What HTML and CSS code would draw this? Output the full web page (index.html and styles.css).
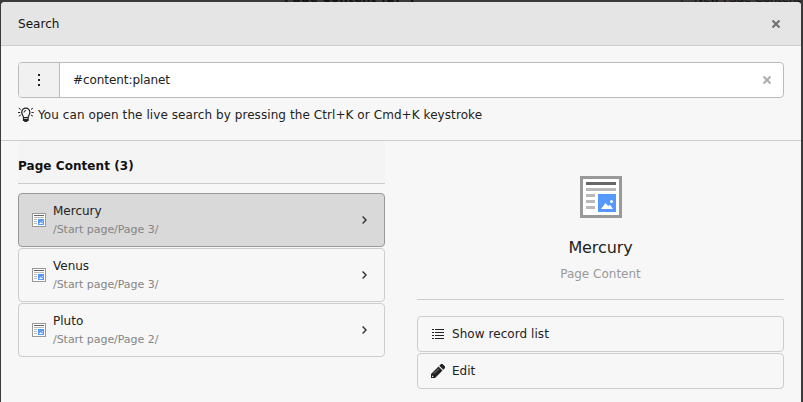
FILE: index.html
```html
<!DOCTYPE html>
<html lang="en">
<head>
<meta charset="utf-8">
<title>Search</title>
<link rel="stylesheet" href="styles.css">
</head>
<body>
<svg class="defs" width="0" height="0">
  <symbol id="content" viewBox="0 0 14 14">
    <path fill="#999" d="M0 0h14v14H0z"/><path fill="#fff" d="M1 1h12v12H1z"/>
    <path fill="#666" d="M2 2h10v1H2z"/>
    <path fill="#b9b9b9" d="M2 4h10v1H2zM2 6h3v1H2zM2 8h3v1H2zM2 10h3v1H2z"/>
    <path fill="#59f" d="M6 6h6v6H6z"/>
    <path fill="#fff" d="M7 11l1.500-2 .9 1 .6-.4 1 1.400z"/><circle cx="10.5" cy="8.5" r=".5" fill="#fff"/>
  </symbol>
  <symbol id="chevron" viewBox="0 0 5 8"><path d="M.6.600L4 4 .6 7.400" fill="none" stroke="#333" stroke-width="1.400"/></symbol>
  <symbol id="close" viewBox="0 0 8 8"><path d="M.5.500l7 7M7.500.500l-7 7" fill="none" stroke="currentColor" stroke-width="2.200"/></symbol>
</svg>
<div class="behind">
  <span class="behind-title">Page Content (2)&nbsp; ?</span>
  <span class="behind-action">+&nbsp; New Page Content</span>
</div>
<main class="modal">
  <header class="modal-header">
    <span class="title">Search</span>
    <svg class="close"><use href="#close"/></svg>
  </header>
  <section class="search">
    <div class="input-group">
      <div class="addon"><svg width="2" height="12"><path fill="#222" d="M0 0h2v2H0zM0 5h2v2H0zM0 10h2v2H0z"/></svg></div>
      <div class="field"><span class="query">#content:planet</span><svg class="close clear"><use href="#close"/></svg></div>
    </div>
    <div class="hint">
      <svg width="16" height="16" viewBox="0 0 16 16" fill="none" stroke="#222">
        <path stroke-width="1.200" d="M5.500 10.500C5.500 9 3.700 7.800 3.700 5.300a4.100 4.100 0 0 1 8.200 0c0 2.500-1.800 3.700-1.800 5.200zM5.500 10.500h4.600v3H5.500zM5.500 12.300h4.600M6.300 14.500h3"/>
        <path d="M6 5.500a2 2 0 0 1 2-2M.8 1.200l1.900 1.200M0 5.500h2.200M.8 9.200l1.900-1.200M14.900 1.200l-1.900 1.200M15.700 5.500h-2.200M14.900 9.200l-1.900-1.200"/>
      </svg>
      <span class="hint-text">You can open the live search by pressing the Ctrl+K or Cmd+K keystroke</span>
    </div>
  </section>
  <div class="results">
    <section class="list">
      <h2><span>Page Content (3)</span></h2>
      <div class="item active"><svg class="icon"><use href="#content"/></svg><div class="label"><span class="name">Mercury</span><span class="path">/Start page/Page 3/</span></div><svg class="chevron"><use href="#chevron"/></svg></div>
      <div class="item"><svg class="icon"><use href="#content"/></svg><div class="label"><span class="name">Venus</span><span class="path">/Start page/Page 3/</span></div><svg class="chevron"><use href="#chevron"/></svg></div>
      <div class="item"><svg class="icon"><use href="#content"/></svg><div class="label"><span class="name">Pluto</span><span class="path">/Start page/Page 2/</span></div><svg class="chevron"><use href="#chevron"/></svg></div>
    </section>
    <section class="detail">
      <div class="summary">
        <svg class="big"><use href="#content"/></svg>
        <span class="detail-name">Mercury</span>
        <span class="detail-type">Page Content</span>
      </div>
      <div class="action">
        <svg width="14" height="14" viewBox="0 0 14 14"><path fill="#222" d="M1 2h2v1H1zM4 2h9v1H4zM1 5h2v1H1zM4 5h9v1H4zM1 8h2v1H1zM4 8h9v1H4zM1 11h2v1H1zM4 11h9v1H4z"/></svg>
        <span class="action-list">Show record list</span>
      </div>
      <div class="action">
        <svg width="14" height="14" viewBox="0 0 14 14"><path fill="#222" d="M0 14V10l7.500-7.500 4 4L4 14zM8.300 1.700L10 0h1.500L14 2.500V4l-1.700 1.700z"/><path d="M2.800 9.700l5-5" stroke="#aaa" stroke-width=".8"/><path fill="#f7f7f7" d="M1 11.300l1.700 1.700H1z"/></svg>
        <span class="action-edit">Edit</span>
      </div>
    </section>
  </div>
</main>
</body>
</html>
```
FILE: styles.css
```css
* { box-sizing: border-box; }
body {
  margin: 0;
  height: 402px;
  overflow: hidden;
  padding: 2px 2px 0 1px;
  background: #3b393a;
  color: #222;
  font: 12px/18px Verdana, "DejaVu Sans", sans-serif;
}
svg { display: block; flex: none; }
.defs { position: absolute; }
.behind { position: absolute; top: 0; left: 0; width: 803px; height: 2px; overflow: hidden; color: #111; }
.behind span { position: absolute; top: -9px; line-height: 14px; white-space: nowrap; }
.behind-title { left: 284px; font-weight: bold; letter-spacing: .1px; }
.behind-action { left: 677px; letter-spacing: -.25px; }
.modal { position: relative; height: 400px; background: #f7f7f7; border-radius: 4px 4px 0 0; overflow: hidden; }
.modal-header {
  height: 44px;
  display: flex;
  align-items: center;
  justify-content: space-between;
  padding: 0 21px 0 17px;
  background: #e5e5e5;
  border-bottom: 1px solid #cdcdcd;
  color: #111;
}
.title { letter-spacing: .05px; }
.close { width: 8px; height: 8px; color: #737373; }
.search { height: 95px; padding: 16px 17px 0; border-bottom: 1px solid #cdcdcd; }
.input-group { display: flex; height: 36px; border: 1px solid #bbb; border-radius: 4px; background: #fff; overflow: hidden; }
.addon { width: 41px; display: flex; align-items: center; justify-content: center; background: #f1f1f1; border-right: 1px solid #bbb; }
.field { flex: 1; display: flex; align-items: center; justify-content: space-between; padding: 0 12px 0 13px; }
.query { letter-spacing: -.07px; }
.clear { color: #b0b0b0; }
.hint { display: flex; align-items: center; gap: 4px; margin-top: 8px; white-space: nowrap; }
.hint-text { letter-spacing: .075px; }
.results { display: grid; grid-template-columns: 367px 367px; gap: 32px; padding: 0 17px; }
h2 { height: 43px; margin: 0 0 9px; padding-top: 16px; background: #f4f4f4; border-bottom: 1px solid #cdcdcd; color: #111; font-size: 12px; line-height: 18px; letter-spacing: .06px; }
.item { height: 54px; display: flex; align-items: center; gap: 7px; margin-bottom: 1px; padding: 0 17px 0 13px; border: 1px solid #cdcdcd; border-radius: 4px; }
.item.active { background: #d9d9d9; border-color: #999; }
.icon { width: 14px; height: 14px; }
.label { flex: 1; display: flex; flex-direction: column; }
.path { font-size: 11px; color: #858585; letter-spacing: -.04px; padding-top: 1px; margin-bottom: -1px; }
.chevron { width: 5px; height: 8px; }
.summary { display: flex; flex-direction: column; align-items: center; height: 159px; padding-top: 35px; margin-bottom: 16px; border-bottom: 1px solid #cdcdcd; }
.big { width: 42px; height: 42px; }
.detail-name { margin-top: 18px; font-size: 16px; line-height: 24px; letter-spacing: -.1px; }
.detail-type { margin-top: 5px; color: #999; }
.action { height: 36px; display: flex; align-items: center; gap: 7px; margin-bottom: 1px; padding: 0 13px; border: 1px solid #cdcdcd; border-radius: 4px; }
.action-list { letter-spacing: .06px; }
```
